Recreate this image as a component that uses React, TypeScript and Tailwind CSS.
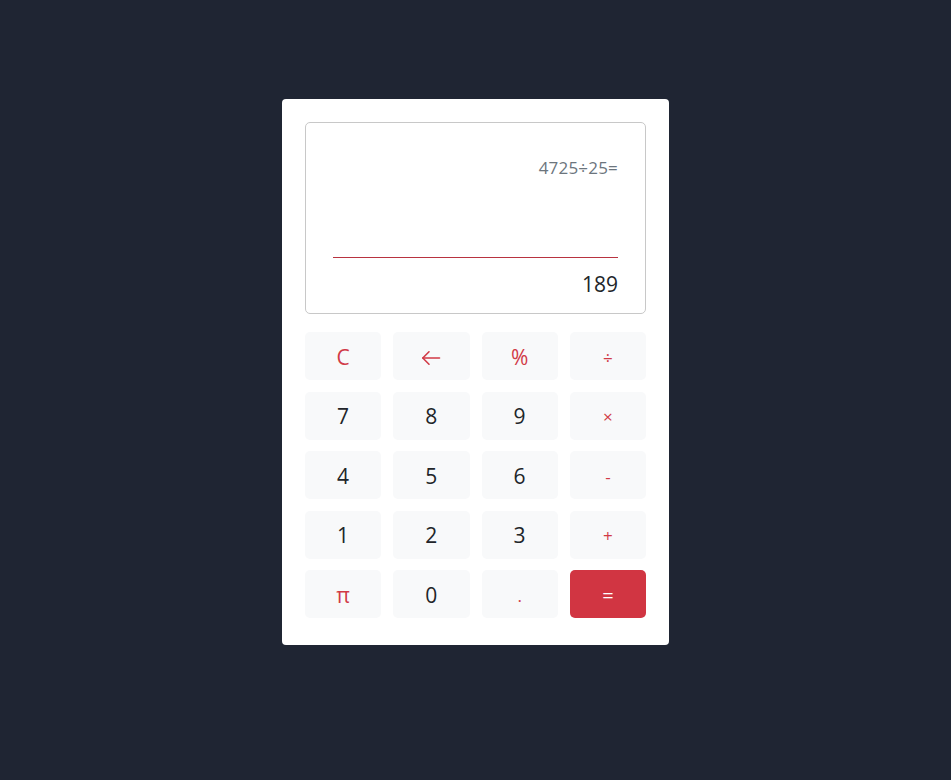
import React from "react";

type Key = {
  label: React.ReactNode;
  kind: "num" | "op" | "fn" | "eq";
};

const BackArrow = () => (
  <svg width="20" height="16" viewBox="0 0 20 16" fill="none" stroke="currentColor" strokeWidth={1.6} strokeLinecap="round" strokeLinejoin="round">
    <path d="M18.5 8H1.8" />
    <path d="M8 1.8L1.8 8L8 14.2" />
  </svg>
);

const keys: Key[] = [
  { label: "C", kind: "fn" },
  { label: <BackArrow />, kind: "fn" },
  { label: "%", kind: "fn" },
  { label: "÷", kind: "op" },
  { label: "7", kind: "num" },
  { label: "8", kind: "num" },
  { label: "9", kind: "num" },
  { label: "×", kind: "op" },
  { label: "4", kind: "num" },
  { label: "5", kind: "num" },
  { label: "6", kind: "num" },
  { label: "-", kind: "op" },
  { label: "1", kind: "num" },
  { label: "2", kind: "num" },
  { label: "3", kind: "num" },
  { label: "+", kind: "op" },
  { label: "π", kind: "fn" },
  { label: "0", kind: "num" },
  { label: ".", kind: "op" },
  { label: "=", kind: "eq" },
];

const keyStyle = (kind: Key["kind"]) => {
  switch (kind) {
    case "num":
      return "bg-[#f8f9fa] text-[#212529] text-[21px] font-[380]";
    case "fn":
      return "bg-[#f8f9fa] text-[#d13a46] text-[21px] font-[380]";
    case "op":
      return "bg-[#f8f9fa] text-[#d13a46] text-[17px]";
    case "eq":
      return "bg-[#d13542] text-white text-[20px]";
  }
};

export default function App() {
  return (
    <div
      className="min-h-screen bg-[#1f2533] flex justify-center pt-[99px]"
      style={{ fontFamily: '"Open Sans", "Noto Sans", sans-serif' }}
    >
      <div className="w-[387px] h-[546px] bg-white rounded-[4px] pt-[23px] px-[23px]">
        {/* Display */}
        <div className="h-[192px] border border-[#c8c8c8] rounded-[5px] flex flex-col px-[27px] pt-[33px] pb-[15px]">
          <div className="h-[24px] text-right text-[17px] leading-[24px] text-[#6c757d] tracking-[0.2px]">
            4725÷25=
          </div>
          <div className="flex-1" />
          <div className="h-px shrink-0 bg-[#b83340]" />
          <div className="mt-[12px] h-[28px] text-right text-[21px] leading-[28px] text-[#212529] font-[380]">
            189
          </div>
        </div>

        {/* Keypad */}
        <div className="mt-[18px] grid grid-cols-4 gap-x-[12px] gap-y-[11.5px]">
          {keys.map((k, i) => (
            <button
              key={i}
              className={`h-[48px] pt-[3px] rounded-[5px] flex items-center justify-center ${keyStyle(k.kind)}`}
            >
              {k.label}
            </button>
          ))}
        </div>
      </div>
    </div>
  );
}
